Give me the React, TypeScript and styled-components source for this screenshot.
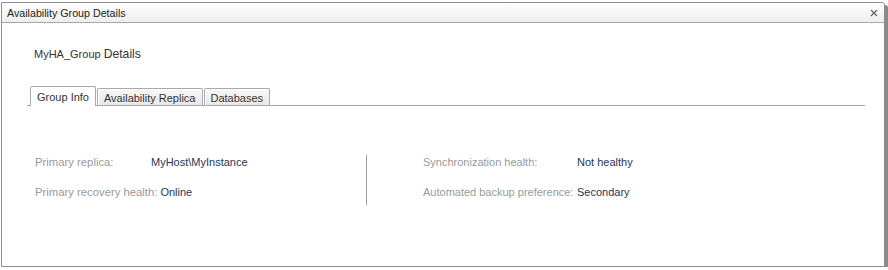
import React from "react";
import styled, { createGlobalStyle } from "styled-components";

const Global = createGlobalStyle`
  html, body { margin: 0; padding: 0; background: #ffffff; }
  body { padding: 2px 0 0 1px; font-family: "Liberation Sans", Arial, sans-serif; }
`;

const Window = styled.div`
  box-sizing: border-box;
  width: 884px;
  height: 265px;
  border: 1px solid #8e8e8e;
  border-top-right-radius: 3px;
  background: #fff;
  box-shadow: 3px 3px 0 #8a8a8a;
  display: flex;
  flex-direction: column;
`;

const TitleBar = styled.div`
  height: 19px;
  border-bottom: 1px solid #a8a8a8;
  background: linear-gradient(#ffffff, #eeeeee);
  display: flex;
  align-items: center;
  justify-content: space-between;
  padding: 0 6px 0 5px;
  border-top-right-radius: 3px;
`;

const Title = styled.span`
  font-size: 10.7px;
  color: #222;
`;

const Close = styled.svg`
  width: 8px;
  height: 8px;
`;

const Body = styled.div`
  padding: 24px 19px 0 25px;
  display: flex;
  flex-direction: column;
`;

const Heading = styled.div`
  padding-left: 7px;
  color: #333;
  height: 16px;
  display: flex;
  align-items: baseline;
`;

const HeadSmall = styled.span`
  font-size: 11px;
`;

const HeadBig = styled.span`
  font-size: 12.2px;
  margin-left: 3px;
`;

const TabStrip = styled.div`
  margin-top: 22px;
  border-bottom: 1px solid #a6a6a6;
  display: flex;
  align-items: flex-end;
  gap: 1px;
  padding-left: 3px;
  height: 20px;
`;

const Tab = styled.div<{ $active?: boolean }>`
  box-sizing: border-box;
  font-size: 11px;
  color: #333;
  padding: 0 6px;
  border: 1px solid #a9a9a9;
  border-bottom: none;
  border-radius: 2px 2px 0 0;
  display: flex;
  align-items: center;
  height: ${(p) => (p.$active ? "20px" : "17px")};
  background: ${(p) => (p.$active ? "#ffffff" : "linear-gradient(#f7f7f7, #e9e9e9)")};
  box-shadow: ${(p) => (p.$active ? "none" : "inset 1px 1px 0 #ffffff")};
  margin-bottom: ${(p) => (p.$active ? "-1px" : "0")};
  padding-top: ${(p) => (p.$active ? "0" : "1px")};
`;

const Info = styled.div`
  margin-top: 49px;
  display: flex;
  padding-left: 8px;
`;

const Column = styled.div<{ $divider?: boolean }>`
  display: flex;
  flex-direction: column;
  gap: 16px;
  padding: 0 0 6px ${(p) => (p.$divider ? "56px" : "0")};
  width: ${(p) => (p.$divider ? "auto" : "331px")};
  border-left: ${(p) => (p.$divider ? "1px solid #a0a0a0" : "none")};
`;

const Row = styled.div`
  display: flex;
  font-size: 11px;
  height: 14px;
  align-items: center;
`;

const Label = styled.span<{ $w: number; $size: number }>`
  color: #9a9a9a;
  font-size: ${(p) => p.$size}px;
  min-width: ${(p) => p.$w}px;
  padding-right: 3px;
`;

const Value = styled.span`
  color: #1f3656;
`;

export default function App() {
  return (
    <>
      <Global />
      <Window>
        <TitleBar>
          <Title>Availability Group Details</Title>
          <Close viewBox="0 0 8 8">
            <path d="M1 1 L7 7 M7 1 L1 7" stroke="#666" strokeWidth="1.3" fill="none" />
          </Close>
        </TitleBar>
        <Body>
          <Heading>
            <HeadSmall>MyHA_Group</HeadSmall>
            <HeadBig>Details</HeadBig>
          </Heading>
          <TabStrip>
            <Tab $active>Group Info</Tab>
            <Tab>Availability Replica</Tab>
            <Tab>Databases</Tab>
          </TabStrip>
          <Info>
            <Column>
              <Row>
                <Label $w={113} $size={11.3}>Primary replica:</Label>
                <Value>MyHost\MyInstance</Value>
              </Row>
              <Row>
                <Label $w={113} $size={11.3}>Primary recovery health:</Label>
                <Value>Online</Value>
              </Row>
            </Column>
            <Column $divider>
              <Row>
                <Label $w={151} $size={11}>Synchronization health:</Label>
                <Value>Not healthy</Value>
              </Row>
              <Row>
                <Label $w={151} $size={11}>Automated backup preference:</Label>
                <Value>Secondary</Value>
              </Row>
            </Column>
          </Info>
        </Body>
      </Window>
    </>
  );
}
